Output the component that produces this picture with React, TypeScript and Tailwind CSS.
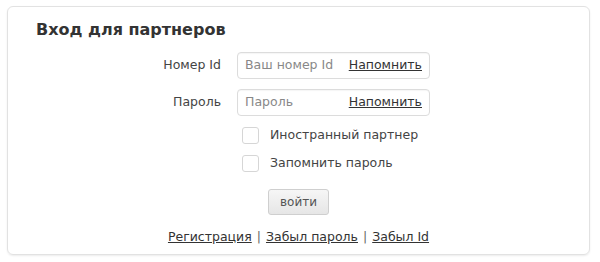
import React from 'react';

const font = { fontFamily: '"DejaVu Sans", Verdana, sans-serif' };

function Field({ label, placeholder }: { label: string; placeholder: string }) {
  return (
    <div className="flex items-center">
      <div className="w-[185px] text-right text-[12.5px] text-[#444]">{label}</div>
      <div className="ml-[16px] flex h-[27px] w-[193px] items-center justify-between rounded-[4px] border border-[#dcdcdc] bg-white px-[7px] shadow-[inset_0_1px_1px_rgba(0,0,0,0.04)]">
        <span className="text-[12.5px] text-[#888]">{placeholder}</span>
        <a href="#" className="text-[12.5px] text-[#333] underline">Напомнить</a>
      </div>
    </div>
  );
}

function Check({ label }: { label: string }) {
  return (
    <label className="flex h-[17px] items-center">
      <span className="h-[17px] w-[17px] rounded-[3px] border border-[#d6d6d6] bg-white" />
      <span className="ml-[11px] text-[12.5px] text-[#444]">{label}</span>
    </label>
  );
}

export default function App() {
  return (
    <div className="h-[262px] w-[600px] bg-white pl-[7px] pt-[6px]" style={font}>
      <div className="flex h-[249px] w-[583px] flex-col rounded-[6px] border border-[#e2e2e2] pl-[28px] shadow-[0_1px_2px_rgba(0,0,0,0.08)]">
        <h2 className="mt-[12px] text-[16px] font-bold leading-[22px] text-[#333]">Вход для партнеров</h2>

        <div className="mt-[11px] flex flex-col gap-[10px]">
          <Field label="Номер Id" placeholder="Ваш номер Id" />
          <Field label="Пароль" placeholder="Пароль" />
        </div>

        <div className="ml-[206px] mt-[11px] flex flex-col gap-[11px]">
          <Check label="Иностранный партнер" />
          <Check label="Запомнить пароль" />
        </div>

        <div className="-ml-[28px] mt-[17px] flex justify-center">
          <button className="h-[26px] w-[61px] rounded-[3px] border border-[#cfcfcf] bg-gradient-to-b from-[#f6f6f6] to-[#e6e6e6] text-[12px] font-normal text-[#555]">
            войти
          </button>
        </div>

        <div className="-ml-[28px] mt-[13px] flex justify-center text-[12.5px] text-[#333]">
          <a href="#" className="underline">Регистрация</a>
          <span className="mx-[5px] text-[#666]">|</span>
          <a href="#" className="underline">Забыл пароль</a>
          <span className="mx-[5px] text-[#666]">|</span>
          <a href="#" className="underline">Забыл Id</a>
        </div>
      </div>
    </div>
  );
}
